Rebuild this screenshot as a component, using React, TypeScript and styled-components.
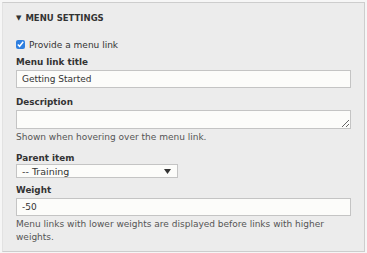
import React, { useState } from 'react';
import styled, { createGlobalStyle } from 'styled-components';

const GlobalStyle = createGlobalStyle`
  body {
    margin: 0;
    background: #f6f6f6;
    font-family: "DejaVu Sans", Verdana, sans-serif;
    color: #333;
  }
`;

const Panel = styled.details`
  box-sizing: border-box;
  width: 363px;
  height: 250px;
  margin: 2px 0 0 2px;
  background: #ececec;
  border: 1px solid #cdcdcd;
  border-left-color: #e2e2e2;
  padding: 0 13px;
`;

const Summary = styled.summary`
  list-style: none;
  display: flex;
  align-items: center;
  gap: 4px;
  height: 30px;
  font-size: 8.5px;
  font-weight: bold;
  text-transform: uppercase;
  color: #333;
  cursor: pointer;
  &::-webkit-details-marker {
    display: none;
  }
`;

const Arrow = styled.span`
  font-size: 7px;
  margin-top: -1px;
`;

const Body = styled.div`
  display: flex;
  flex-direction: column;
  padding-top: 5px;
`;

const CheckRow = styled.label`
  display: flex;
  align-items: center;
  gap: 4px;
  height: 13px;
  font-size: 9px;
  margin-bottom: 5px;
`;

const Check = styled.input`
  width: 9px;
  height: 9px;
  margin: 0;
  accent-color: #2e7fe0;
`;

const Field = styled.div<{ $gap?: number }>`
  display: flex;
  flex-direction: column;
  margin-bottom: ${(p) => p.$gap ?? 0}px;
`;

const Label = styled.label<{ $gap?: number }>`
  font-size: 8.8px;
  font-weight: bold;
  line-height: 12px;
  height: 12px;
  margin-bottom: ${(p) => p.$gap ?? 2}px;
`;

const TextInput = styled.input`
  box-sizing: border-box;
  width: 335px;
  height: 18px;
  margin: 0;
  padding: 0 5px;
  border: 1px solid #c4c4c4;
  background: #fcfcfa;
  font-family: inherit;
  font-size: 9px;
  color: #333;
  outline: none;
`;

const TextArea = styled.textarea`
  box-sizing: border-box;
  width: 335px;
  height: 19px;
  margin: 0;
  padding: 2px 5px;
  border: 1px solid #c4c4c4;
  background: #fcfcfa;
  font-family: inherit;
  font-size: 9px;
  resize: vertical;
  outline: none;
  display: block;
`;

const Help = styled.div`
  font-size: 9px;
  line-height: 13px;
  color: #555;
  padding-top: 2px;
`;

const SelectBox = styled.div`
  box-sizing: border-box;
  width: 162px;
  height: 14px;
  display: flex;
  align-items: center;
  justify-content: space-between;
  padding: 0 6px 0 5px;
  border: 1px solid #c4c4c4;
  background: #fcfcfa;
  font-size: 9.5px;
  color: #333;
`;

const Caret = styled.svg`
  width: 7px;
  height: 5px;
`;

export default function App() {
  const [checked, setChecked] = useState(true);
  const [title, setTitle] = useState('Getting Started');
  const [weight, setWeight] = useState('-50');

  return (
    <>
      <GlobalStyle />
      <Panel open>
        <Summary>
          <Arrow>▼</Arrow>
          Menu settings
        </Summary>
        <Body>
          <CheckRow>
            <Check type="checkbox" checked={checked} onChange={() => setChecked(!checked)} />
            Provide a menu link
          </CheckRow>
          <Field $gap={8}>
            <Label>Menu link title</Label>
            <TextInput value={title} onChange={(e) => setTitle(e.target.value)} />
          </Field>
          <Field $gap={8}>
            <Label>Description</Label>
            <TextArea rows={1} />
            <Help>Shown when hovering over the menu link.</Help>
          </Field>
          <Field $gap={6}>
            <Label $gap={0}>Parent item</Label>
            <SelectBox>
              <span>-- Training</span>
              <Caret viewBox="0 0 7 5">
                <path d="M0 0 H7 L3.5 5 Z" fill="#333" />
              </Caret>
            </SelectBox>
          </Field>
          <Field>
            <Label>Weight</Label>
            <TextInput value={weight} onChange={(e) => setWeight(e.target.value)} />
            <Help>Menu links with lower weights are displayed before links with higher weights.</Help>
          </Field>
        </Body>
      </Panel>
    </>
  );
}
